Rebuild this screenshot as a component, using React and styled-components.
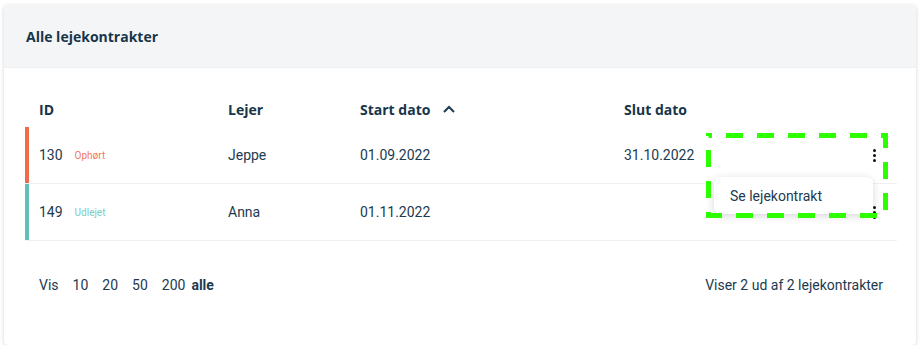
import React from "react";
import styled, { createGlobalStyle } from "styled-components";

const GlobalStyle = createGlobalStyle`
  html, body {
    margin: 0;
    padding: 0;
    background: #fff;
  }
  body {
    padding: 5px 8px 0 4px;
    font-family: Roboto, "Liberation Sans", sans-serif;
    color: #1c3a50;
  }
`;

const Card = styled.section`
  width: 912px;
  height: 340px;
  box-sizing: border-box;
  background: #fff;
  border-radius: 4px;
  box-shadow: 0 1px 4px rgba(0, 0, 0, 0.16), 0 0 1px rgba(0, 0, 0, 0.08);
  display: flex;
  flex-direction: column;
  overflow: visible;
`;

const CardHeader = styled.header`
  height: 63px;
  background: #f4f5f7;
  border-radius: 4px 4px 0 0;
  border-bottom: 1px solid #eef0f2;
  box-sizing: border-box;
  display: flex;
  align-items: center;
  padding-left: 22px;
`;

const Title = styled.h2`
  margin: 0;
  font-family: "Open Sans", "DejaVu Sans", sans-serif;
  font-weight: 700;
  font-size: 14px;
  color: #173549;
`;

const CardBody = styled.div`
  padding: 23px 19px 0 21px;
  display: flex;
  flex-direction: column;
`;

const Row = styled.div`
  display: grid;
  grid-template-columns: 189px 132px 264px 1fr 40px;
  align-items: center;
  height: ${p => (p.$head ? "36px" : "57px")};
  box-sizing: border-box;
  border-bottom: ${p => (p.$head ? "none" : "1px solid #eef0f2")};
  box-shadow: ${p => (p.$bar ? `inset 4px 0 0 ${p.$bar}` : "none")};
`;

const HeadCell = styled.div`
  padding-left: 14px;
  font-family: "Open Sans", "DejaVu Sans", sans-serif;
  font-weight: 700;
  font-size: 14px;
  color: #173549;
  display: flex;
  align-items: center;
  gap: 13px;
`;

const Cell = styled.div`
  padding-left: 14px;
  font-size: 14px;
  display: flex;
  align-items: center;
`;

const Status = styled.span`
  font-size: 10px;
  margin-left: 12px;
  color: ${p => p.$color};
`;

const ActionCell = styled.div`
  position: relative;
  height: 100%;
  display: flex;
  align-items: center;
  justify-content: flex-end;
  padding-right: 21px;
`;

const Kebab = styled.span`
  display: flex;
  flex-direction: column;
  gap: 2px;
  i {
    width: 3px;
    height: 3px;
    border-radius: 50%;
    background: #111;
  }
`;

const Menu = styled.div`
  position: absolute;
  left: -143px;
  top: 50px;
  width: 159px;
  height: 37px;
  background: #fff;
  border-radius: 6px;
  box-shadow: 0 2px 8px rgba(0, 0, 0, 0.16);
  display: flex;
  align-items: center;
  padding-left: 16px;
  box-sizing: border-box;
  font-size: 14px;
  color: #1c3a50;
  z-index: 2;
`;

const Highlight = styled.svg`
  position: absolute;
  left: -151px;
  top: 6px;
  z-index: 3;
  pointer-events: none;
`;

const Footer = styled.footer`
  display: flex;
  justify-content: space-between;
  align-items: center;
  padding: 34px 14px 0 14px;
  font-size: 14px;
  line-height: 20px;
`;

const PageSizes = styled.div`
  display: flex;
  gap: 14px;
`;

const PageSize = styled.span`
  font-weight: ${p => (p.$active ? 700 : 400)};
  margin-left: ${p => (p.$active ? "-8px" : "0")};
`;

const Chevron = () => (
  <svg width="12" height="8" viewBox="0 0 12 8">
    <path d="M1 7 L6 2 L11 7" fill="none" stroke="#1c3a50" strokeWidth="2" />
  </svg>
);

const Dots = () => (
  <Kebab>
    <i />
    <i />
    <i />
  </Kebab>
);

const rows = [
  { id: 130, status: "Ophørt", bar: "#f26a4a", text: "#f07a5e", tenant: "Jeppe", start: "01.09.2022", end: "31.10.2022", open: true },
  { id: 149, status: "Udlejet", bar: "#5ec0b6", text: "#7ccbc2", tenant: "Anna", start: "01.11.2022", end: "" },
];

export default function App() {
  return (
    <>
      <GlobalStyle />
      <Card>
        <CardHeader>
          <Title>Alle lejekontrakter</Title>
        </CardHeader>
        <CardBody>
          <Row $head>
            <HeadCell>ID</HeadCell>
            <HeadCell>Lejer</HeadCell>
            <HeadCell>
              Start dato <Chevron />
            </HeadCell>
            <HeadCell>Slut dato</HeadCell>
            <div />
          </Row>
          {rows.map(r => (
            <Row key={r.id} $bar={r.bar}>
              <Cell>
                {r.id}
                <Status $color={r.text}>{r.status}</Status>
              </Cell>
              <Cell>{r.tenant}</Cell>
              <Cell>{r.start}</Cell>
              <Cell>{r.end}</Cell>
              <ActionCell>
                <Dots />
                {r.open && (
                  <>
                    <Menu>Se lejekontrakt</Menu>
                    <Highlight width="182" height="85">
                      <rect
                        x="2.5"
                        y="2.5"
                        width="177"
                        height="80"
                        fill="none"
                        stroke="#2dff00"
                        strokeWidth="5"
                        strokeDasharray="17 14"
                        strokeDashoffset="13.5"
                      />
                    </Highlight>
                  </>
                )}
              </ActionCell>
            </Row>
          ))}
          <Footer>
            <PageSizes>
              <span>Vis</span>
              <PageSize>10</PageSize>
              <PageSize>20</PageSize>
              <PageSize>50</PageSize>
              <PageSize>200</PageSize>
              <PageSize $active>alle</PageSize>
            </PageSizes>
            <span>Viser 2 ud af 2 lejekontrakter</span>
          </Footer>
        </CardBody>
      </Card>
    </>
  );
}
